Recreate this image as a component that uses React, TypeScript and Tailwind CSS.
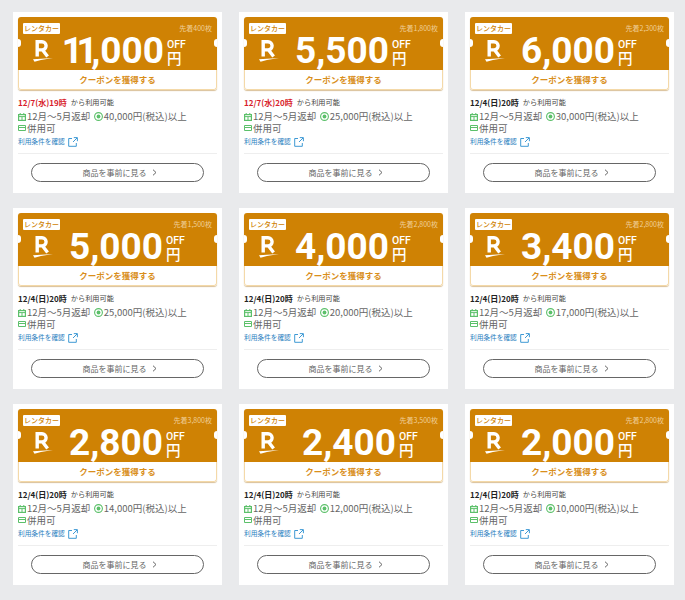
const coupons = [
  { amount: "11,000", limit: "先着400枚", date: "12/7(水)19時", red: true, min: "40,000", pr: "pr-[24px]" },
  { amount: "5,500", limit: "先着1,800枚", date: "12/7(水)20時", red: true, min: "25,000", pr: "pr-[25px]" },
  { amount: "6,000", limit: "先着2,300枚", date: "12/4(日)20時", red: false, min: "30,000", pr: "pr-[25px]" },
  { amount: "5,000", limit: "先着1,500枚", date: "12/4(日)20時", red: false, min: "25,000", pr: "pr-[25px]" },
  { amount: "4,000", limit: "先着2,800枚", date: "12/4(日)20時", red: false, min: "20,000", pr: "pr-[25px]" },
  { amount: "3,400", limit: "先着2,800枚", date: "12/4(日)20時", red: false, min: "17,000", pr: "pr-[25px]" },
  { amount: "2,800", limit: "先着3,800枚", date: "12/4(日)20時", red: false, min: "14,000", pr: "pr-[25px]" },
  { amount: "2,400", limit: "先着3,500枚", date: "12/4(日)20時", red: false, min: "12,000", pr: "pr-[18px]" },
  { amount: "2,000", limit: "先着2,800枚", date: "12/4(日)20時", red: false, min: "10,000", pr: "pr-[25px]" },
];

function RLogo() {
  return (
    <svg width="20" height="22" viewBox="0 0 20 22" className="shrink-0">
      <path d="M4.2 16.5V1.7H9a4 4 0 0 1 0 8.2H4.5M9.2 9.5 14.6 16.5" fill="none" stroke="#fff" strokeWidth="3.4" />
      <path d="M0 19.2 20 18 8 20 1.5 21.8Z" fill="#fff" />
    </svg>
  );
}

function CalIcon() {
  return (
    <svg width="8" height="8" viewBox="0 0 8 8" className="shrink-0">
      <rect x="0.6" y="1.6" width="6.8" height="5.8" fill="none" stroke="#5cc06a" strokeWidth="1.2" />
      <path d="M0.6 3.6h6.8M2.2 0v2M5.8 0v2M4 4v3" stroke="#5cc06a" strokeWidth="1" />
    </svg>
  );
}

function YenIcon() {
  return (
    <svg width="9" height="9" viewBox="0 0 9 9" className="shrink-0">
      <circle cx="4.5" cy="4.5" r="3.9" fill="none" stroke="#5cc06a" strokeWidth="1.1" />
      <circle cx="4.5" cy="4.5" r="1.9" fill="#5cc06a" />
    </svg>
  );
}

function TicketIcon() {
  return (
    <svg width="8" height="6" viewBox="0 0 8 6" className="shrink-0">
      <path d="M0.5 0.5h7v5h-7Z M0.5 2.5h7" fill="none" stroke="#5cc06a" />
    </svg>
  );
}

function ExtIcon() {
  return (
    <svg width="10" height="10" viewBox="0 0 10 10" className="shrink-0">
      <path d="M4 1.5H.7v7.8h7.6V6M5 5l4-4M5.8.6h3.6v3.6" fill="none" stroke="#2a8fd0" strokeWidth="0.9" />
    </svg>
  );
}

function Amount({ value }: { value: string }) {
  return (
    <span className="mt-[4px] text-[37px] leading-[30px] font-bold text-white font-['Roboto',sans-serif] whitespace-nowrap">
      {value.startsWith("11") ? (
        <>
          <span className="tracking-[-6.5px]">11</span>
          <span>{value.slice(2)}</span>
        </>
      ) : (
        value
      )}
    </span>
  );
}

function Card({ c }: { c: (typeof coupons)[number] }) {
  return (
    <div className="bg-white p-[5px] h-[181px] flex flex-col">
      <div className="relative rounded-[3px] overflow-hidden shadow-[0_1px_1px_rgba(180,130,50,0.5)]">
        <div className="relative bg-[#cf8204] h-[53px] px-[5px] pt-[6px]">
          <div className="flex justify-between items-start">
            <span className="bg-white text-[#cf8204] text-[7px] leading-[11px] h-[11px] px-[1px] rounded-[1px] font-medium">レンタカー</span>
            <span className="text-[7px] leading-[11px] text-[#f0cf98]">{c.limit}</span>
          </div>
          <div className="flex items-center h-[30px]">
            <div className="pl-[10px] mt-[4px]"><RLogo /></div>
            <div className={`flex-1 flex items-center justify-end gap-[3px] ${c.pr}`}>
              <Amount value={c.amount} />
              <span className="w-[21px] flex flex-col gap-[1px] text-white mt-[6px]">
                <span className="text-[10.5px] leading-[10px] font-medium font-['Roboto',sans-serif]">OFF</span>
                <span className="text-[14.5px] leading-[14px] font-medium">円</span>
              </span>
            </div>
          </div>
          <span className="absolute left-[-3px] top-[22px] w-[6px] h-[8px] rounded-full bg-white" />
          <span className="absolute right-[-3px] top-[22px] w-[6px] h-[8px] rounded-full bg-white" />
        </div>
        <div className="h-[20px] bg-white border-x border-b border-[#f4d9a8] rounded-b-[3px] text-center text-[#d98f1c] text-[8.5px] leading-[19px] font-bold">
          クーポンを獲得する
        </div>
      </div>
      <div className="mt-[7px] flex items-center h-[11px] text-[8px] leading-[11px] text-[#333]">
        <span className={c.red ? "font-bold text-[#d81e2c]" : "font-bold text-[#222]"}>{c.date}</span>
        <span className="ml-[4px] text-[7.2px] text-[#444]">から利用可能</span>
      </div>
      <div className="mt-[2px] flex items-center h-[13px] text-[9.5px] leading-[13px] text-[#666] whitespace-nowrap">
        <CalIcon />
        <span className="ml-[1px]">12月～5月返却</span>
        <span className="ml-[4px]"><YenIcon /></span>
        <span className="ml-[0.5px]">{c.min}円(税込)以上</span>
      </div>
      <div className="-mt-[1px] flex items-center h-[12px] text-[9.5px] leading-[12px] text-[#666]">
        <TicketIcon />
        <span className="ml-[1px]">併用可</span>
      </div>
      <div className="mt-[2px] flex items-center gap-[3px] h-[11px] text-[6.7px] text-[#2a80c0]">
        <span>利用条件を確認</span>
        <ExtIcon />
      </div>
      <div className="mt-[6px] border-t border-[#eeeeee]" />
      <div className="mt-[9px] mx-[13px] h-[19px] rounded-full border border-[#666] flex items-center justify-center gap-[5px] pl-[4px] text-[8px] text-[#666]">
        <span>商品を事前に見る</span>
        <svg width="5" height="7" viewBox="0 0 5 7"><path d="M1 .7 4 3.5 1 6.3" fill="none" stroke="#666" /></svg>
      </div>
    </div>
  );
}

export default function App() {
  return (
    <div className="w-[685px] h-[600px] overflow-hidden bg-[#e9eaec] pl-[13px] pt-[12px] font-['Noto_Sans_CJK_JP','Noto_Sans',sans-serif]">
      <div className="grid grid-cols-[209px_209px_209px] gap-x-[17px] gap-y-[15px]">
        {coupons.map((c, i) => (
          <Card key={i} c={c} />
        ))}
      </div>
    </div>
  );
}
